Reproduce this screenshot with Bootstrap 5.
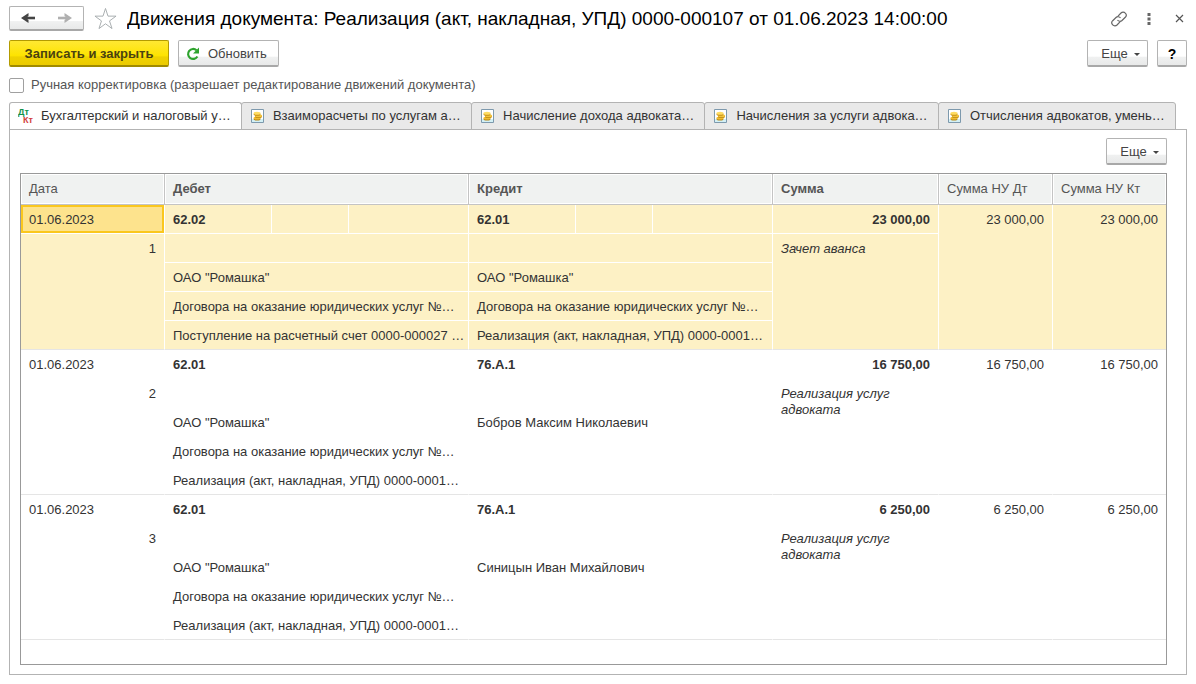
<!DOCTYPE html>
<html lang="ru">
<head>
<meta charset="utf-8">
<meta name="viewport" content="width=device-width, initial-scale=1">
<title>Движения документа</title>
<link href="https://cdn.jsdelivr.net/npm/bootstrap@5.3.0/dist/css/bootstrap.min.css" rel="stylesheet">
<style>
  body { font-family: "Liberation Sans", Arial, sans-serif; font-size: 13px; line-height: 16px; color: #333; background: #fff; }
  .window { padding: 6px 9px 9px; }
  .doc-head { height: 25px; }
  .doc-title { font-size: 19px; line-height: 24px; color: #000; }
  .star-btn { margin: 0 10px; }
  .cmd-bar { margin-top: 9px; gap: 9px; }
  .cmd { --bs-btn-font-size: 13px; --bs-btn-line-height: 16px; --bs-btn-padding-x: 12px; --bs-btn-border-radius: 2px;
    --bs-btn-color: #444; --bs-btn-border-color: #b3b3b3; --bs-btn-hover-border-color: #999; --bs-btn-hover-color: #222;
    height: 27px; padding-top: 5px; padding-bottom: 4px; white-space: nowrap;
    background: linear-gradient(#fff 0 64%, #f0f1f1 66%, #e8e9e9); border-bottom: 2px solid #a8a8a8; }
  .cmd-main { --bs-btn-color: #4a4210; --bs-btn-border-color: #b39b00; width: 160px; padding-left: 0; padding-right: 0;
    background: linear-gradient(#ffe833, #fde300 62%, #efd200 66%, #ebcb00); border-bottom-color: #a08b00; }
  .cmd-nav { height: 25px; width: 38px; padding: 0; }
  .cmd-nav:first-child { border-right-color: #f5eebc; }
  .cmd-nav:last-child { border-left-width: 0; }
  .cmd-refresh { padding-left: 7px; padding-right: 11px; gap: 8px; }
  .cmd-help { width: 30px; padding-left: 0; padding-right: 0; color: #000; font-size: 14px; }
  .cmd-more { width: 61px; padding-left: 12px; padding-right: 6px; }
  .cmd-more::after { border-width: 3px 3px 0; margin-left: 6px; vertical-align: 2px; }
  .tool { border: 0; background: none; padding: 0; line-height: 0; }
  .head-tools { gap: 20px; padding-right: 3px; }
  .manual { color: #555; gap: 7px; margin-top: 10px; }
  .manual .form-check-input { width: 15px; height: 15px; border-radius: 2px; border-color: #a0a0a0; }
  .doc-tabs { --bs-nav-tabs-border-width: 0; margin: 9px 11px 0 0; }
  .doc-tabs .nav-item { flex: 1 1 auto; min-width: 0; margin-bottom: -1px; }
  .doc-tabs .nav-item + .nav-item { margin-left: -1px; }
  .doc-tabs .nav-link { width: 100%; height: 28px; border: 1px solid #b3b3b3; border-radius: 3px 3px 0 0; background: #e9e9e9; color: #333;
    margin: 0; padding: 0 4px 0 9px; gap: 9px; }
  .doc-tabs .nav-link.active { background: #fff; border-color: #b3b3b3 #b3b3b3 #fff; color: #333; padding-left: 8px; gap: 7px; }
  .doc-tabs svg { flex: none; }
  .doc-panel { border: 1px solid #b3b3b3; padding: 8px 19px 9px 10px; }
  .grid-box { border: 1px solid #999; margin-top: 8px; }
  .moves { table-layout: fixed; width: 100%; border-collapse: separate; border-spacing: 0; }
  .moves th { height: 31px; padding: 0 8px; background: #f0f2f1; color: #555; font-weight: 400; border: solid #c4c4c4; border-width: 0 1px 1px 0; box-shadow: inset 0 0 0 1px #fff; }
  .moves th:last-child { border-right-width: 0; }
  .moves th.strong { font-weight: 700; }
  .moves td { height: 29px; padding: 2px 2px 0 8px; border: solid #fff; border-width: 0 1px 1px 0; vertical-align: top; line-height: 26px; white-space: nowrap; overflow: hidden; text-overflow: ellipsis; }
  .moves td.text-end { padding-right: 8px; }
  .moves td.end { border-right-width: 0; }
  .moves td.note { font-style: italic; white-space: normal; line-height: 16px; padding-top: 7px; padding-right: 32px; }
  .moves td.edge, .moves tr:last-child td { border-bottom-color: #e5e5e5; }
  .moves .picked td { background: #fdf1c5; }
  .moves .picked td.cursor { background: #fde38d; box-shadow: inset 0 0 0 2px #fac71e; }
</style>
</head>
<body>
<svg width="0" height="0" class="position-absolute" aria-hidden="true">
  <symbol id="coins" viewBox="0 0 13 14">
    <path d="M.5.5h12v13H.5z" fill="#fff" stroke="#7d99ad"/>
    <path d="M1 10h11v3H1z" fill="#d3f0f6"/>
    <ellipse cx="6" cy="10" rx="3.500" ry="1.500" fill="#b98410"/><ellipse cx="6" cy="9" rx="3.500" ry="1.500" fill="#f0bd32"/>
    <ellipse cx="7.500" cy="7.500" rx="3.500" ry="1.500" fill="#b98410"/><ellipse cx="7.500" cy="6.700" rx="3.500" ry="1.500" fill="#f3c53d"/>
    <ellipse cx="6" cy="5.300" rx="3.500" ry="1.500" fill="#c48f18"/><ellipse cx="6" cy="4.300" rx="3.500" ry="1.500" fill="#ffdc62"/>
  </symbol>
</svg>
<div class="window d-flex flex-column min-vh-100">
  <header class="doc-head d-flex align-items-center">
    <div class="btn-group" role="group" aria-label="Навигация">
      <button type="button" class="btn cmd cmd-nav" aria-label="Назад"><svg width="14" height="12" viewBox="0 0 14 12" class="d-block m-auto"><path d="M14 6H4" stroke="#444" stroke-width="2.600"/><path d="M7.500 1v3L5 6l2.500 2v3L0 6z" fill="#444"/></svg></button>
      <button type="button" class="btn cmd cmd-nav" aria-label="Вперед"><svg width="14" height="12" viewBox="0 0 14 12" class="d-block m-auto"><path d="M0 6h10" stroke="#b0b0b0" stroke-width="2.600"/><path d="M6.500 1v3L9 6 6.500 8v3L14 6z" fill="#b0b0b0"/></svg></button>
    </div>
    <button type="button" class="tool star-btn" aria-label="Избранное"><svg width="23" height="24" viewBox="0 0 24 24"><path d="m12 1 2.600 8h8.400l-6.800 5 2.600 8L12 17l-6.800 5 2.600-8L1 9h8.400z" fill="#fff" stroke="#a6abae"/></svg></button>
    <h1 class="doc-title mb-0 flex-fill text-truncate fw-normal">Движения документа: Реализация (акт, накладная, УПД) 0000-000107 от 01.06.2023 14:00:00</h1>
    <div class="head-tools d-flex align-items-center">
      <button type="button" class="tool" aria-label="Получить ссылку"><svg width="16" height="16" viewBox="0 0 16 16" fill="none" stroke="#666" stroke-width="1.200"><path d="M7 5.200 10 2a3 3 0 0 1 4.300.1 3 3 0 0 1 0 4.200L11 9.500a3 3 0 0 1-4.500-.5"/><path d="m9 10.800-3 3.200a3 3 0 0 1-4.300-.1 3 3 0 0 1 0-4.200L5 6.500a3 3 0 0 1 4.500.5"/></svg></button>
      <button type="button" class="tool" aria-label="Меню"><svg width="4" height="12" viewBox="0 0 4 12" fill="#666"><path d="M.5 0h3v3h-3zM.5 4.500h3v3h-3zM.5 9h3v3h-3z"/></svg></button>
      <button type="button" class="tool ps-1" aria-label="Закрыть"><svg width="9" height="9" viewBox="0 0 9 9"><path d="m1 1 7 7M8 1 1 8" stroke="#555" stroke-width="1.200"/></svg></button>
    </div>
  </header>
  <div class="cmd-bar d-flex">
    <button type="button" class="btn cmd cmd-main fw-bold">Записать и закрыть</button>
    <button type="button" class="btn cmd cmd-refresh d-flex align-items-center"><svg width="14" height="14" viewBox="0 0 14 14"><path d="M11.400 9.500A5 5 0 1 1 10.500 3.300" fill="none" stroke="#2ea32e" stroke-width="2.200"/><path d="M13 .5v6H7z" fill="#2ea32e"/></svg>Обновить</button>
    <button type="button" class="btn cmd cmd-more dropdown-toggle ms-auto">Еще</button>
    <button type="button" class="btn cmd cmd-help fw-bold">?</button>
  </div>
  <div class="manual d-flex align-items-center"><input class="form-check-input m-0" type="checkbox" id="manual"><label for="manual">Ручная корректировка (разрешает редактирование движений документа)</label></div>

  <ul class="nav nav-tabs doc-tabs flex-nowrap" role="tablist">
    <li class="nav-item" role="presentation"><button type="button" role="tab" aria-selected="true" class="nav-link active d-flex align-items-center"><svg width="16" height="16" viewBox="0 0 16 16" font-family="Liberation Sans, sans-serif" font-weight="700" font-size="9"><text x="0" y="7" fill="#12914a">Дт</text><text x="5" y="15" fill="#d23c3c">Кт</text></svg><span class="text-truncate">Бухгалтерский и налоговый у…</span></button></li>
    <li class="nav-item" role="presentation"><button type="button" role="tab" aria-selected="false" class="nav-link d-flex align-items-center"><svg width="13" height="14"><use href="#coins"/></svg><span class="text-truncate">Взаиморасчеты по услугам а…</span></button></li>
    <li class="nav-item" role="presentation"><button type="button" role="tab" aria-selected="false" class="nav-link d-flex align-items-center"><svg width="13" height="14"><use href="#coins"/></svg><span class="text-truncate">Начисление дохода адвоката…</span></button></li>
    <li class="nav-item" role="presentation"><button type="button" role="tab" aria-selected="false" class="nav-link d-flex align-items-center"><svg width="13" height="14"><use href="#coins"/></svg><span class="text-truncate">Начисления за услуги адвока…</span></button></li>
    <li class="nav-item" role="presentation"><button type="button" role="tab" aria-selected="false" class="nav-link d-flex align-items-center"><svg width="13" height="14"><use href="#coins"/></svg><span class="text-truncate">Отчисления адвокатов, умень…</span></button></li>
  </ul>

  <main class="doc-panel flex-fill d-flex flex-column">
    <button type="button" class="btn cmd cmd-more dropdown-toggle align-self-end">Еще</button>
    <div class="grid-box flex-fill">
      <table class="moves">
        <colgroup><col style="width:144px"><col style="width:107px"><col style="width:77px"><col style="width:120px"><col style="width:107px"><col style="width:77px"><col style="width:120px"><col style="width:166px"><col style="width:114px"><col style="width:113px"></colgroup>
        <thead>
          <tr><th>Дата</th><th colspan="3" class="strong">Дебет</th><th colspan="3" class="strong">Кредит</th><th class="strong">Сумма</th><th>Сумма НУ Дт</th><th>Сумма НУ Кт</th></tr>
        </thead>
        <tbody class="picked">
          <tr><td class="cursor">01.06.2023</td><td class="fw-bold">62.02</td><td></td><td></td><td class="fw-bold">62.01</td><td></td><td></td><td class="text-end fw-bold">23 000,00</td><td rowspan="5" class="text-end edge">23 000,00</td><td rowspan="5" class="text-end edge end">23 000,00</td></tr>
          <tr><td rowspan="4" class="text-end edge">1</td><td colspan="3"></td><td colspan="3"></td><td rowspan="4" class="note edge">Зачет аванса</td></tr>
          <tr><td colspan="3">ОАО "Ромашка"</td><td colspan="3">ОАО "Ромашка"</td></tr>
          <tr><td colspan="3">Договора на оказание юридических услуг №…</td><td colspan="3">Договора на оказание юридических услуг №…</td></tr>
          <tr><td colspan="3">Поступление на расчетный счет 0000-000027 …</td><td colspan="3">Реализация (акт, накладная, УПД) 0000-0001…</td></tr>
        </tbody>
        <tbody>
          <tr><td>01.06.2023</td><td class="fw-bold">62.01</td><td></td><td></td><td class="fw-bold">76.А.1</td><td></td><td></td><td class="text-end fw-bold">16 750,00</td><td rowspan="5" class="text-end edge">16 750,00</td><td rowspan="5" class="text-end edge end">16 750,00</td></tr>
          <tr><td rowspan="4" class="text-end edge">2</td><td colspan="3"></td><td colspan="3"></td><td rowspan="4" class="note edge">Реализация услуг адвоката</td></tr>
          <tr><td colspan="3">ОАО "Ромашка"</td><td colspan="3">Бобров Максим Николаевич</td></tr>
          <tr><td colspan="3">Договора на оказание юридических услуг №…</td><td colspan="3"></td></tr>
          <tr><td colspan="3">Реализация (акт, накладная, УПД) 0000-0001…</td><td colspan="3"></td></tr>
        </tbody>
        <tbody>
          <tr><td>01.06.2023</td><td class="fw-bold">62.01</td><td></td><td></td><td class="fw-bold">76.А.1</td><td></td><td></td><td class="text-end fw-bold">6 250,00</td><td rowspan="5" class="text-end edge">6 250,00</td><td rowspan="5" class="text-end edge end">6 250,00</td></tr>
          <tr><td rowspan="4" class="text-end edge">3</td><td colspan="3"></td><td colspan="3"></td><td rowspan="4" class="note edge">Реализация услуг адвоката</td></tr>
          <tr><td colspan="3">ОАО "Ромашка"</td><td colspan="3">Синицын Иван Михайлович</td></tr>
          <tr><td colspan="3">Договора на оказание юридических услуг №…</td><td colspan="3"></td></tr>
          <tr><td colspan="3">Реализация (акт, накладная, УПД) 0000-0001…</td><td colspan="3"></td></tr>
        </tbody>
      </table>
    </div>
  </main>
</div>
<script src="https://cdn.jsdelivr.net/npm/bootstrap@5.3.0/dist/js/bootstrap.bundle.min.js"></script>
</body>
</html>
